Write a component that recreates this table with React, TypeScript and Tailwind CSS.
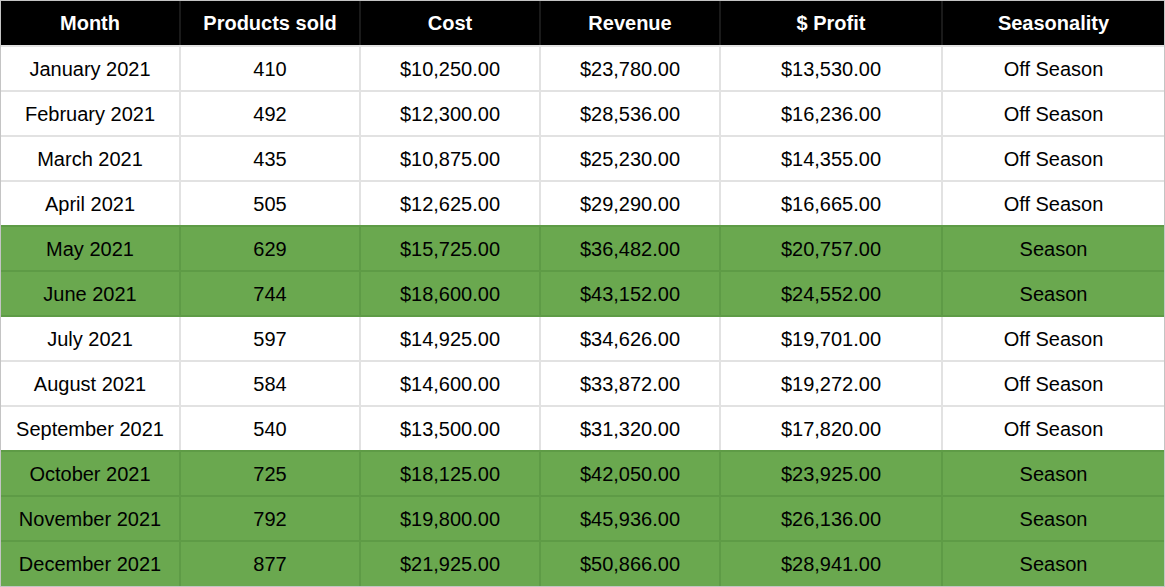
import React from 'react';

type Row = {
  month: string;
  sold: number;
  cost: string;
  revenue: string;
  profit: string;
  season: boolean;
};

const rows: Row[] = [
  { month: 'January 2021', sold: 410, cost: '$10,250.00', revenue: '$23,780.00', profit: '$13,530.00', season: false },
  { month: 'February 2021', sold: 492, cost: '$12,300.00', revenue: '$28,536.00', profit: '$16,236.00', season: false },
  { month: 'March 2021', sold: 435, cost: '$10,875.00', revenue: '$25,230.00', profit: '$14,355.00', season: false },
  { month: 'April 2021', sold: 505, cost: '$12,625.00', revenue: '$29,290.00', profit: '$16,665.00', season: false },
  { month: 'May 2021', sold: 629, cost: '$15,725.00', revenue: '$36,482.00', profit: '$20,757.00', season: true },
  { month: 'June 2021', sold: 744, cost: '$18,600.00', revenue: '$43,152.00', profit: '$24,552.00', season: true },
  { month: 'July 2021', sold: 597, cost: '$14,925.00', revenue: '$34,626.00', profit: '$19,701.00', season: false },
  { month: 'August 2021', sold: 584, cost: '$14,600.00', revenue: '$33,872.00', profit: '$19,272.00', season: false },
  { month: 'September 2021', sold: 540, cost: '$13,500.00', revenue: '$31,320.00', profit: '$17,820.00', season: false },
  { month: 'October 2021', sold: 725, cost: '$18,125.00', revenue: '$42,050.00', profit: '$23,925.00', season: true },
  { month: 'November 2021', sold: 792, cost: '$19,800.00', revenue: '$45,936.00', profit: '$26,136.00', season: true },
  { month: 'December 2021', sold: 877, cost: '$21,925.00', revenue: '$50,866.00', profit: '$28,941.00', season: true },
];

const headers = ['Month', 'Products sold', 'Cost', 'Revenue', '$ Profit', 'Seasonality'];
const widths = ['w-[180px]', 'w-[180px]', 'w-[180px]', 'w-[180px]', 'w-[222px]', 'w-[221px]'];

export default function App() {
  return (
    <div
      className="w-[1165px] h-[587px] border border-[#c4c4c4] bg-white text-[20px] text-black"
      style={{ fontFamily: '"Liberation Sans", Arial, sans-serif' }}
    >
      {/* Header */}
      <div className="flex h-[44px] bg-black">
        {headers.map((h, i) => (
          <div
            key={h}
            className={`${widths[i]} flex items-center justify-center font-bold text-white ${
              i < 5 ? 'border-r-2 border-[#1a1a1a]' : ''
            }`}
          >
            {h}
          </div>
        ))}
      </div>

      {/* Body */}
      {rows.map((r, ri) => {
        const prevSeason = ri > 0 && rows[ri - 1].season;
        const topLine = r.season || prevSeason ? 'border-[#5e9b46]' : 'border-[#e2e2e2]';
        const last = ri === rows.length - 1;
        const cells = [
          r.month,
          String(r.sold),
          r.cost,
          r.revenue,
          r.profit,
          r.season ? 'Season' : 'Off Season',
        ];
        return (
          <div
            key={r.month}
            className={`flex ${last ? 'h-[46px]' : 'h-[45px]'} border-t-2 ${topLine} ${
              r.season ? 'bg-[#6aa84f]' : 'bg-white'
            }`}
          >
            {cells.map((c, i) => (
              <div
                key={i}
                className={`${widths[i]} flex items-center justify-center ${
                  i < 5 ? `border-r-2 ${r.season ? 'border-[#5e9b46]' : 'border-[#e2e2e2]'}` : ''
                }`}
              >
                {c}
              </div>
            ))}
          </div>
        );
      })}
    </div>
  );
}
